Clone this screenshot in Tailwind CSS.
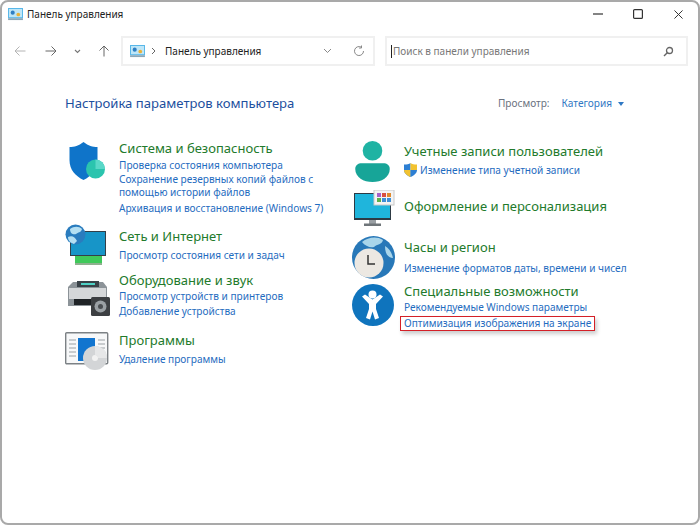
<!DOCTYPE html>
<html lang="ru">
<head>
  <meta charset="UTF-8" />
  <title>Панель управления</title>
  <script src="https://cdn.jsdelivr.net/npm/@tailwindcss/browser@4"></script>
</head>
<body class="w-[700px] h-[525px] overflow-hidden bg-white font-['Noto_Sans','Open_Sans',sans-serif]">
  <div class="w-[700px] h-[525px] border-2 border-[#a9a9a9] rounded-lg bg-white flex flex-col">
    <!-- title bar -->
    <div class="h-[24px] flex items-center pl-[6px] shrink-0">
      <svg width="15" height="13" viewBox="0 0 16 14"><rect width="16" height="11" fill="#4fb3e8"/><rect x="1" y="1" width="14" height="9" fill="#bfe6f7"/><circle cx="5" cy="5" r="2.2" fill="#2f7fc4"/><circle cx="11" cy="7" r="2" fill="#e8b23a"/><rect x="0" y="11" width="16" height="2" fill="#8aa7b8"/></svg>
      <span class="ml-[4px] text-[10px] text-[#222]">Панель управления</span>
      <div class="ml-auto flex items-center">
        <svg class="mr-[30px]" width="10" height="10" viewBox="0 0 10 10"><path d="M0 5h10" stroke="#333" stroke-width="1.2"/></svg>
        <svg class="mr-[31px]" width="10" height="10" viewBox="0 0 10 10"><rect x=".6" y=".6" width="8.8" height="8.8" rx="1" fill="none" stroke="#333" stroke-width="1.2"/></svg>
        <svg class="mr-[15px]" width="9" height="9" viewBox="0 0 10 10"><path d="M.5.5l9 9M9.5.5l-9 9" stroke="#333" stroke-width="1.1"/></svg>
      </div>
    </div>
    <!-- toolbar -->
    <div class="h-[30px] mt-[10px] flex items-center shrink-0">
      <svg class="ml-[12px]" width="12" height="12" viewBox="0 0 12 12"><path d="M11.5 6H1M5.5 1.5L1 6l4.500 4.500" fill="none" stroke="#b4b4b4" stroke-width="1"/></svg>
      <svg class="ml-[19px]" width="12" height="12" viewBox="0 0 12 12"><path d="M.5 6H11M6.5 1.500L11 6l-4.500 4.500" fill="none" stroke="#666" stroke-width="1"/></svg>
      <svg class="ml-[17px]" width="7" height="5" viewBox="0 0 7 5"><path d="M1 1l2.500 2.500L6 1" fill="none" stroke="#777" stroke-width="1.1"/></svg>
      <svg class="ml-[17px]" width="12" height="12" viewBox="0 0 12 12"><path d="M6 11.500V1M1.500 5.500L6 1l4.500 4.500" fill="none" stroke="#666" stroke-width="1"/></svg>
      <div class="ml-[11px] w-[254px] h-[30px] border-2 border-[#f0f0f0] flex items-center pl-[7px]">
        <svg width="15" height="13" viewBox="0 0 16 14"><rect width="16" height="11" fill="#4fb3e8"/><rect x="1" y="1" width="14" height="9" fill="#bfe6f7"/><circle cx="5" cy="5" r="2.2" fill="#2f7fc4"/><circle cx="11" cy="7" r="2" fill="#e8b23a"/><rect x="0" y="11" width="16" height="2" fill="#8aa7b8"/></svg>
        <svg class="ml-[6px]" width="5" height="8" viewBox="0 0 5 8"><path d="M1 1l3 3-3 3" fill="none" stroke="#666" stroke-width="1"/></svg>
        <span class="ml-[9px] text-[10px] text-[#222]">Панель управления</span>
        <svg class="ml-auto" width="9" height="6" viewBox="0 0 9 6"><path d="M1 1l3.500 3.500L8 1" fill="none" stroke="#888" stroke-width="1"/></svg>
        <svg class="ml-[21px] mr-[8px]" width="12" height="12" viewBox="0 0 12 12"><path d="M10.500 6A4.500 4.500 0 1 1 8.500 2.300M8.500.5v2.500H6" fill="none" stroke="#888" stroke-width="1"/></svg>
      </div>
      <div class="ml-[10px] w-[303px] h-[30px] border-2 border-[#f0f0f0] flex items-center pl-[4px]">
        <span class="w-px h-[13px] bg-[#222]"></span>
        <span class="ml-[1px] text-[10px] text-[#777]">Поиск в панели управления</span>
        <svg class="ml-auto mr-[12px]" width="11" height="11" viewBox="0 0 11 11"><circle cx="6.500" cy="4.500" r="3" fill="none" stroke="#666" stroke-width="1.300"/><path d="M4.500 6.500L1 10" stroke="#666" stroke-width="1.500"/></svg>
      </div>
    </div>
    <!-- heading -->
    <div class="mt-[28px] pl-[63px] pr-[50px] flex items-center h-[20px] shrink-0">
      <h1 class="text-[13.1px] text-[#1d4f9e]">Настройка параметров компьютера</h1>
      <span class="ml-auto text-[10.1px] text-[#6b7280]">Просмотр:</span>
      <span class="ml-[12px] text-[10.1px] text-[#2f78c4]">Категория</span>
      <span class="ml-[6px] mr-[24px] w-0 h-0 border-x-[3.500px] border-x-transparent border-t-[4px] border-t-[#2f78c4]"></span>
    </div>
    <!-- categories -->
    <div class="mt-[26px] flex">
      <div class="w-[285px] ml-[63px] shrink-0 flex flex-col">
        <div class="flex h-[88px]">
          <div class="w-[54px] shrink-0 pl-[3px] pt-[2px]">
            <svg width="39" height="38" viewBox="0 0 36 38"><path d="M14 0C9 4 5 5 0 5v13c0 10 6 16 14 20 8-4 14-10 14-20V5c-5 0-9-1-14-5z" fill="#0f74c9"/><circle cx="26" cy="27" r="9.500" fill="#2bc4ae"/><path d="M26 27V17.500A9.500 9.500 0 0 1 35.500 27z" fill="#5ad8c8"/></svg>
          </div>
          <div class="flex flex-col">
            <a class="text-[13px] leading-[16px] text-[#227a2b]">Система и безопасность</a>
            <a class="mt-[2px] text-[10.1px] leading-[14.500px] text-[#1f6cc0]">Проверка состояния компьютера</a>
            <a class="text-[10.1px] leading-[13.500px] text-[#1f6cc0]">Сохранение резервных копий файлов с<br>помощью истории файлов</a>
            <a class="mt-[1px] text-[10.1px] leading-[14.500px] text-[#1f6cc0]">Архивация и восстановление (Windows 7)</a>
          </div>
        </div>
        <div class="flex h-[44px]">
          <div class="w-[54px] shrink-0">
            <svg class="-mt-[4px]" width="42" height="42" viewBox="0 0 42 42"><rect x="10" y="31" width="27" height="10" fill="#3fc95a"/><rect x="10" y="39" width="27" height="2" fill="#8fb08f"/><rect x="5" y="7" width="36" height="25" fill="#333f48"/><rect x="6" y="8" width="34" height="23" fill="#1795c8"/><circle cx="10.500" cy="10.500" r="10" fill="#2a7cbe"/><path d="M5 5c4-3 9-3 12 0-1 4-4 3-6 5-2 1-6 0-6-5zM3 13c4-2 7 0 9 4l-3 3c-3-1-6-3-6-7z" fill="#b5dff2"/></svg>
          </div>
          <div class="flex flex-col">
            <a class="text-[13px] leading-[16px] text-[#227a2b]">Сеть и Интернет</a>
            <a class="mt-[4px] text-[10.1px] leading-[14px] text-[#1f6cc0]">Просмотр состояния сети и задач</a>
          </div>
        </div>
        <div class="flex h-[60px]">
          <div class="w-[54px] shrink-0 pl-[3px] pt-[9px]">
            <svg width="42" height="36" viewBox="0 0 42 36"><path d="M5 1h30l4 5v19H0V6z" fill="#8c9398"/><rect x="9" y="0" width="22" height="6" fill="#3a4248"/><rect x="13" y="2" width="14" height="2" fill="#4fd1c5"/><rect x="1" y="7" width="37" height="11" fill="#d5d7d9"/><rect x="6" y="18" width="27" height="6" fill="#1f2326"/><rect x="23" y="16" width="19" height="19" rx="1.500" fill="#3c3f42"/><circle cx="32.500" cy="25.500" r="6" fill="#9aa0a4"/><circle cx="32.500" cy="25.500" r="2.500" fill="#4a4e52"/></svg>
          </div>
          <div class="flex flex-col">
            <a class="text-[13px] leading-[16px] text-[#227a2b]">Оборудование и звук</a>
            <a class="mt-[1px] text-[10.1px] leading-[15px] text-[#1f6cc0]">Просмотр устройств и принтеров</a>
            <a class="text-[10.1px] leading-[15px] text-[#1f6cc0]">Добавление устройства</a>
          </div>
        </div>
        <div class="flex h-[44px]">
          <div class="w-[54px] shrink-0">
            <svg width="44" height="38" viewBox="0 0 44 38"><rect x=".7" y=".7" width="42" height="31" rx="1" fill="#f7f8f9" stroke="#7c8185" stroke-width="1.400"/><rect x="13" y="6" width="17" height="23" fill="#1275cf"/><path d="M4 8h7M4 12h7M4 16h7M4 20h7M4 24h7M33 8h7M33 12h7M33 16h7" stroke="#9aa0a4"/><circle cx="30" cy="26" r="12" fill="#d3d5d7"/><circle cx="30" cy="26" r="3" fill="#f2f2f2"/><path d="M30 14a12 12 0 0 1 12 12h-9a3 3 0 0 0-3-3z" fill="#e6e7e8"/></svg>
          </div>
          <div class="flex flex-col">
            <a class="text-[13px] leading-[16px] text-[#227a2b]">Программы</a>
            <a class="mt-[4px] text-[10.1px] leading-[14px] text-[#1f6cc0]">Удаление программы</a>
          </div>
        </div>
      </div>
      <div class="flex flex-col">
        <div class="flex h-[53px] mt-[3px]">
          <div class="w-[54px] shrink-0 pl-[4px]">
            <svg class="-mt-[2px]" width="37" height="41" viewBox="0 0 37 44"><circle cx="18.500" cy="10.500" r="10.500" fill="#1fb3a3"/><path d="M0 30c0-4 3-6 7-6h23c4 0 7 2 7 6 0 9-9 14-18.500 14S0 39 0 30z" fill="#17a598"/></svg>
          </div>
          <div class="flex flex-col">
            <a class="text-[13px] leading-[16px] text-[#227a2b]">Учетные записи пользователей</a>
            <div class="mt-[4px] flex items-center">
              <svg width="13" height="14" viewBox="0 0 13 14"><path d="M6.500 0C5 1 3 1.500 0 1.500V7c0 3 3 5.500 6.500 7z" fill="#2d7fd3"/><path d="M6.500 0c1.500 1 3.500 1.500 6.500 1.500V7H6.500z" fill="#f2c230"/><path d="M0 7h6.500v7C3 12.500 0 10 0 7z" fill="#f2c230"/><path d="M6.500 7H13c0 3-3 5.500-6.500 7z" fill="#2d7fd3"/></svg>
              <a class="ml-[3px] text-[10.1px] leading-[14px] text-[#1f6cc0]">Изменение типа учетной записи</a>
            </div>
          </div>
        </div>
        <div class="flex h-[43px] items-start">
          <div class="w-[54px] shrink-0 pl-[4px]">
            <svg class="-mt-[6px]" width="41" height="37" viewBox="0 0 41 37"><rect y="3" width="37" height="27" fill="#2d3a44"/><rect x="1" y="4" width="35" height="24" fill="#1fb5dc"/><rect x="15" y="30" width="7" height="4" fill="#9aa0a4"/><rect x="10" y="33.500" width="17" height="2.500" fill="#6f7579"/><rect x="20" y="0" width="20" height="15" fill="#f4f4f4" stroke="#c8c8c8"/><rect x="23" y="3" width="4" height="4" fill="#a65fc9"/><rect x="28" y="3" width="4" height="4" fill="#d9503f"/><rect x="33" y="3" width="4" height="4" fill="#e08a2d"/><rect x="23" y="8" width="4" height="4" fill="#5db04a"/><rect x="28" y="8" width="4" height="4" fill="#3e8fd6"/><rect x="33" y="8" width="4" height="4" fill="#3e8fd6"/></svg>
          </div>
          <a class="mt-[2px] text-[13px] leading-[16px] text-[#227a2b]">Оформление и персонализация</a>
        </div>
        <div class="flex h-[44px]">
          <div class="w-[54px] shrink-0 pl-[2px]">
            <svg class="-mt-[3px]" width="43" height="43" viewBox="0 0 43 43"><circle cx="21.500" cy="21.500" r="21.500" fill="#2878b8"/><path d="M10 6c6-5 15-6 21-2-1 5-6 4-9 7-4 1-9-1-12-5zM33 10c4 2 7 7 8 12-4 0-8-3-8-12z" fill="#a9d5ea"/><circle cx="17" cy="27" r="14.500" fill="#ece8e2"/><path d="M16 19v9h7" fill="none" stroke="#333" stroke-width="1.500"/></svg>
          </div>
          <div class="flex flex-col">
            <a class="text-[13px] leading-[16px] text-[#227a2b]">Часы и регион</a>
            <a class="mt-[6px] text-[10.1px] leading-[14px] text-[#1f6cc0]">Изменение форматов даты, времени и чисел</a>
          </div>
        </div>
        <div class="flex">
          <div class="w-[54px] shrink-0 pl-[2px] pt-[1px]">
            <svg width="42" height="42" viewBox="0 0 42 42"><circle cx="21" cy="21" r="21" fill="#0f74bd"/><circle cx="20.500" cy="10.500" r="4" fill="#fff"/><path d="M10 12.500l3-2 7.500 5 7.500-5 3 2-7 7.500v5l3 9-4 1.500-2.500-8-2.500 8-4-1.500 3-9v-5z" fill="#fff"/></svg>
          </div>
          <div class="flex flex-col items-start">
            <a class="text-[13px] leading-[16px] text-[#227a2b]">Специальные возможности</a>
            <a class="mt-[1px] text-[10.1px] leading-[14px] text-[#1f6cc0]">Рекомендуемые Windows параметры</a>
            <a class="-ml-[4px] mt-[2px] px-[3px] border border-[#d42027] text-[10.1px] leading-[13px] text-[#1f6cc0] shadow-[2px_3px_4px_rgba(0,0,0,0.2)]">Оптимизация изображения на экране</a>
          </div>
        </div>
      </div>
    </div>
  </div>
</body>
</html>
